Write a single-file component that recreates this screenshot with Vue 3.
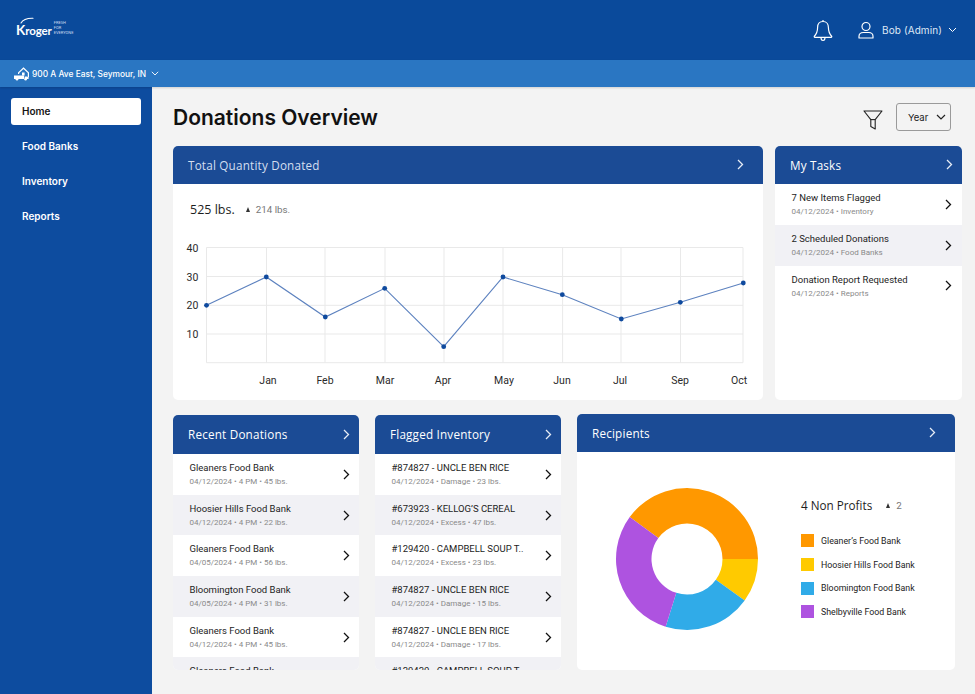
<script setup>
const nav = ['Home', 'Food Banks', 'Inventory', 'Reports']
const tasks = [
  ['7 New Items Flagged', '04/12/2024 • Inventory'],
  ['2 Scheduled Donations', '04/12/2024 • Food Banks'],
  ['Donation Report Requested', '04/12/2024 • Reports'],
]
const donations = [
  ['Gleaners Food Bank', '04/12/2024 • 4 PM • 45 lbs.'],
  ['Hoosier Hills Food Bank', '04/12/2024 • 4 PM • 22 lbs.'],
  ['Gleaners Food Bank', '04/05/2024 • 4 PM • 56 lbs.'],
  ['Bloomington Food Bank', '04/05/2024 • 4 PM • 31 lbs.'],
  ['Gleaners Food Bank', '04/12/2024 • 4 PM • 45 lbs.'],
  ['Gleaners Food Bank', '04/12/2024 • 4 PM • 45 lbs.'],
]
const flagged = [
  ['#874827 - UNCLE BEN RICE', '04/12/2024 • Damage • 23 lbs.'],
  ['#673923 - KELLOG’S CEREAL', '04/12/2024 • Excess • 47 lbs.'],
  ['#129420 - CAMPBELL SOUP T..', '04/12/2024 • Excess • 23 lbs.'],
  ['#874827 - UNCLE BEN RICE', '04/12/2024 • Damage • 15 lbs.'],
  ['#874827 - UNCLE BEN RICE', '04/12/2024 • Damage • 17 lbs.'],
  ['#129420 - CAMPBELL SOUP T..', '04/12/2024 • Excess • 23 lbs.'],
]
const lists = [
  { title: 'Recent Donations', rows: donations },
  { title: 'Flagged Inventory', rows: flagged },
]
const hLines = [
  { y: 247.5, label: '40' },
  { y: 276.5, label: '30' },
  { y: 305.3, label: '20' },
  { y: 334, label: '10' },
]
const months = [
  { x: 266.5, label: 'Jan', lx: 268 },
  { x: 325, label: 'Feb', lx: 325 },
  { x: 385, label: 'Mar', lx: 385 },
  { x: 444, label: 'Apr', lx: 443 },
  { x: 503, label: 'May', lx: 504 },
  { x: 562.6, label: 'Jun', lx: 562 },
  { x: 621, label: 'Jul', lx: 620 },
  { x: 680.5, label: 'Sep', lx: 680 },
  { x: 743, label: 'Oct', lx: 739 },
]
const points = [
  [206.5, 305.3], [266.3, 277], [325.3, 317], [384.7, 288.3], [443.7, 346.7],
  [503, 277], [562.3, 294.7], [621.3, 319], [680.3, 302.3], [743.3, 283],
]
const linePoints = points.map((p) => p.join(',')).join(' ')

const legend = [
  { name: 'Gleaner’s Food Bank', color: '#ff9800' },
  { name: 'Hoosier Hills Food Bank', color: '#ffca00' },
  { name: 'Bloomington Food Bank', color: '#30abe8' },
  { name: 'Shelbyville Food Bank', color: '#ae53e0' },
]
function arc(a0, a1, R = 71, r = 35.5) {
  const pt = (a, rad) => {
    const t = (a * Math.PI) / 180
    return `${(rad * Math.sin(t)).toFixed(2)} ${(-rad * Math.cos(t)).toFixed(2)}`
  }
  const large = a1 - a0 > 180 ? 1 : 0
  return `M${pt(a0, R)} A${R} ${R} 0 ${large} 1 ${pt(a1, R)} L${pt(a1, r)} A${r} ${r} 0 ${large} 0 ${pt(a0, r)} Z`
}
const segments = [
  { d: arc(-53.8, 90), color: '#ff9800' },
  { d: arc(90, 125.7), color: '#ffca00' },
  { d: arc(125.7, 197.5), color: '#30abe8' },
  { d: arc(197.5, 306.2), color: '#ae53e0' },
]
</script>

<template>
  <div class="app">
    <header class="topbar">
      <div class="logo">
        <svg class="logo-arc" width="16" height="7" viewBox="0 0 16 7" fill="none" stroke="#fff" stroke-width="1.1" stroke-linecap="round"><path d="M1 6C3 2.5 7 1 13 1.2" /></svg>
        <span class="logo-word"><span class="logo-k">K</span>roger</span>
        <span class="logo-tag"><span>FRESH</span><span>FOR</span><span>EVERYONE</span></span>
      </div>
      <div class="top-actions">
        <svg class="bell" width="20" height="24" viewBox="1 0 20 24" fill="none" stroke="#fff" stroke-width="1.2" stroke-linejoin="round">
          <path d="M11 2.5c-3.6 0-5.4 2.8-5.4 6 0 4.6-1.2 6.6-3.4 9 0 .6.3.9 1 .9h15.6c.7 0 1-.3 1-.9-2.2-2.4-3.4-4.4-3.4-9 0-3.2-1.8-6-5.4-6z" />
          <path d="M9 18.6c0 1.6.9 2.9 2 2.9s2-1.3 2-2.9" />
          <path d="M11 1v1.5" />
        </svg>
        <div class="user">
          <svg width="16" height="18" viewBox="0.5 0 16 18" fill="none" stroke="#fff" stroke-width="1.2">
            <circle cx="8.5" cy="5.5" r="4" />
            <path d="M1.5 17v-1.6c0-2.6 2.2-3.9 4.4-3.9h5.2c2.2 0 4.4 1.3 4.4 3.9V17z" stroke-linejoin="round" />
          </svg>
          <span class="user-name">Bob (Admin)</span>
          <svg class="user-chev" width="9" height="6" viewBox="0 0 9 6" fill="none" stroke="#fff" stroke-width="1"><path d="M1 1l3.5 3.5L8 1" /></svg>
        </div>
      </div>
    </header>

    <div class="subbar">
      <svg width="16" height="15" viewBox="1 0 16 15" fill="#fff">
        <path d="M5 6.5 10.5 1.2 16 6.5v5h-1.2V7L10.5 2.9 6.2 7v1H5z" />
        <rect x="9" y="6.5" width="2.6" height="3" />
        <path d="M1 9.5h10v3.4H1zM11.6 10.4h2.6l1.4 1.3v1.2h-4z" />
        <circle cx="4" cy="13.2" r="1.3" />
        <circle cx="12.6" cy="13.2" r="1.3" />
      </svg>
      <span>900 A Ave East, Seymour, IN</span>
      <svg width="8" height="5" viewBox="0 0 8 5" fill="none" stroke="#fff" stroke-width="0.9"><path d="M.8.8 4 4 7.2.8" /></svg>
    </div>

    <div class="body">
      <aside class="sidebar">
        <a v-for="(item, i) in nav" :key="item" class="nav-item" :class="{ active: i === 0 }">{{ item }}</a>
      </aside>

      <main class="main">
        <div class="page-head">
          <h1>Donations Overview</h1>
          <div class="page-tools">
            <svg width="20" height="21" viewBox="0 0 20 21" fill="none" stroke="#222" stroke-width="1.1" stroke-linejoin="round">
              <path d="M1 2h18l-6.8 8.6V20l-4.4-2.4v-7z" />
              <path d="M7.8 10.6h4.4" />
            </svg>
            <div class="select">
              <span>Year</span>
              <svg width="10" height="6" viewBox="0 0 10 6" fill="none" stroke="#222" stroke-width="1.2"><path d="M1 1l4 4 4-4" /></svg>
            </div>
          </div>
        </div>

        <section class="row-top">
          <article class="card">
            <div class="card-head">
              <span class="head-muted">Total Quantity Donated</span>
              <svg class="chev chev-wide" width="7" height="11" viewBox="0 0 7 11" fill="none" stroke="#e6ecf6" stroke-width="1.3"><path d="M1 1l4.5 4.5L1 10" /></svg>
            </div>
            <div class="stat">
              <span class="stat-main">525 lbs.</span>
              <span class="stat-delta"><i class="tri"></i>214 lbs.</span>
            </div>
            <svg class="chart" width="590" height="216" viewBox="173 184 590 216">
              <g stroke="#e9e9e9" stroke-width="1" fill="none">
                <line v-for="l in hLines" :key="l.y" x1="206.5" x2="743" :y1="l.y" :y2="l.y" />
                <line x1="206.5" x2="743" y1="362.7" y2="362.7" />
                <line x1="206.5" x2="206.5" y1="247.5" y2="362.7" />
                <line v-for="m in months" :key="m.label" :x1="m.x" :x2="m.x" y1="247.5" y2="362.7" />
              </g>
              <polyline :points="linePoints" fill="none" stroke="#5d82bf" stroke-width="1.1" />
              <circle v-for="p in points" :key="p[0]" :cx="p[0]" :cy="p[1]" r="2.4" fill="#0f4a9e" />
              <text v-for="l in hLines" :key="l.label" class="axis" x="192.5" :y="l.y + 4" text-anchor="middle">{{ l.label }}</text>
              <text v-for="m in months" :key="m.label" class="axis" :x="m.lx" y="383.5" text-anchor="middle">{{ m.label }}</text>
            </svg>
          </article>

          <article class="card">
            <div class="card-head">
              <span>My Tasks</span>
              <svg class="chev" width="7" height="11" viewBox="0 0 7 11" fill="none" stroke="#e6ecf6" stroke-width="1.3"><path d="M1 1l4.5 4.5L1 10" /></svg>
            </div>
            <div v-for="t in tasks" :key="t[0]" class="list-row">
              <div class="row-text">
                <div class="row-title">{{ t[0] }}</div>
                <div class="row-sub">{{ t[1] }}</div>
              </div>
              <svg class="chev" width="7" height="11" viewBox="0 0 7 11" fill="none" stroke="#111" stroke-width="1.3"><path d="M1 1l4.5 4.5L1 10" /></svg>
            </div>
          </article>
        </section>

        <section class="row-bottom">
          <article v-for="list in lists" :key="list.title" class="card card-list">
            <div class="card-head">
              <span>{{ list.title }}</span>
              <svg class="chev" width="7" height="11" viewBox="0 0 7 11" fill="none" stroke="#e6ecf6" stroke-width="1.3"><path d="M1 1l4.5 4.5L1 10" /></svg>
            </div>
            <div v-for="(r, i) in list.rows" :key="i" class="list-row">
              <div class="row-text">
                <div class="row-title">{{ r[0] }}</div>
                <div class="row-sub">{{ r[1] }}</div>
              </div>
              <svg class="chev" width="7" height="11" viewBox="0 0 7 11" fill="none" stroke="#111" stroke-width="1.3"><path d="M1 1l4.5 4.5L1 10" /></svg>
            </div>
          </article>

          <article class="card card-recipients">
            <div class="card-head">
              <span>Recipients</span>
              <svg class="chev chev-wide" width="7" height="11" viewBox="0 0 7 11" fill="none" stroke="#e6ecf6" stroke-width="1.3"><path d="M1 1l4.5 4.5L1 10" /></svg>
            </div>
            <div class="rec-body">
              <svg width="144" height="144" viewBox="-72 -72 144 144">
                <path v-for="s in segments" :key="s.color" :d="s.d" :fill="s.color" />
              </svg>
              <div class="legend">
                <div class="legend-head">
                  <span class="stat-main small">4 Non Profits</span>
                  <span class="stat-delta"><i class="tri"></i>2</span>
                </div>
                <div v-for="l in legend" :key="l.name" class="legend-item">
                  <i class="swatch" :style="{ background: l.color }"></i>
                  <span>{{ l.name }}</span>
                </div>
              </div>
            </div>
          </article>
        </section>
      </main>
    </div>
  </div>
</template>

<style>
html, body { margin: 0; background: #f3f3f3; }
</style>

<style scoped>
.app {
  width: 975px;
  height: 694px;
  overflow: hidden;
  display: flex;
  flex-direction: column;
  font-family: Roboto, "Liberation Sans", sans-serif;
  color: #1c1c1c;
}
.topbar {
  height: 60px;
  flex: none;
  background: #0a4a9b;
  display: flex;
  align-items: center;
  justify-content: space-between;
  padding: 0 18px 0 16px;
}
.logo { display: flex; align-items: center; gap: 2px; color: #fff; position: relative; }
.logo-arc { position: absolute; left: 4px; top: -5px; }
.logo-word { font-family: Lato, sans-serif; font-weight: 700; font-size: 11.5px; letter-spacing: -0.1px; }
.logo-k { font-size: 13.5px; }
.logo-tag { display: flex; flex-direction: column; font-size: 4px; line-height: 5px; color: #cfdcf0; font-family: Roboto, sans-serif; margin-top: -5px; }
.top-actions { display: flex; align-items: center; gap: 25px; }
.bell { margin-top: 1px; }
.user { display: flex; align-items: center; gap: 8px; color: #dfe8f5; }
.user-name { font-family: Inter, sans-serif; font-size: 10px; letter-spacing: 0.1px; }
.user-chev { margin-left: -2px; }
.subbar {
  height: 27px;
  flex: none;
  background: #2a76c2;
  display: flex;
  align-items: center;
  gap: 2px;
  padding-left: 14px;
  color: #fff;
  font-family: Inter, sans-serif;
  font-size: 8.4px;
  font-weight: 500;
  box-shadow: 0 1px 2px rgba(0, 0, 0, 0.15);
  position: relative;
}
.subbar svg:last-child { margin-left: 3px; }
.body { flex: 1; display: flex; min-height: 0; }
.sidebar {
  width: 152px;
  flex: none;
  box-sizing: border-box;
  background: #0d4c9f;
  padding: 11px 11px 0;
  display: flex;
  flex-direction: column;
  gap: 8px;
}
.nav-item {
  height: 27px;
  line-height: 27px;
  padding-left: 11px;
  font-family: Inter, sans-serif;
  font-size: 10px;
  font-weight: 600;
  color: #fff;
  border-radius: 3px;
}
.nav-item.active { background: #fff; color: #151515; }
.main { flex: 1; padding-left: 21px; min-width: 0; }
.page-head {
  height: 59px;
  display: flex;
  align-items: center;
  justify-content: space-between;
  padding-right: 24px;
}
.page-head h1 {
  margin: 1px 0 0;
  font-family: Inter, sans-serif;
  font-size: 21px;
  font-weight: 600;
  color: #111;
  letter-spacing: 0;
}
.page-tools { display: flex; align-items: center; gap: 13px; margin-top: 1px; }
.page-tools > svg { margin-top: 5px; }
.select {
  width: 55px;
  height: 28px;
  box-sizing: border-box;
  border: 1px solid #9a9a9a;
  border-radius: 3px;
  display: flex;
  align-items: center;
  justify-content: space-between;
  padding: 0 4px 0 11px;
  font-family: Inter, sans-serif;
  font-size: 9.5px;
}
.row-top {
  display: grid;
  grid-template-columns: 590px 187px;
  gap: 12px;
  height: 254px;
}
.row-bottom {
  margin-top: 15px;
  display: grid;
  grid-template-columns: 186px 186px 378px;
  gap: 16px;
  height: 255px;
}
.card {
  background: #fff;
  border-radius: 5px;
  overflow: hidden;
  position: relative;
}
.card-head {
  height: 38px;
  box-sizing: border-box;
  padding: 0 9px 1px 15px;
  background: #1b4b95;
  color: #fff;
  display: flex;
  align-items: center;
  justify-content: space-between;
  font-family: "Open Sans", sans-serif;
  font-size: 11.7px;
  letter-spacing: 0.2px;
}
.card-list .card-head { height: 39px; }
.card-recipients { margin-top: -1px; }
.head-muted { color: #d4dff0; }
.chev-wide { margin-right: 10px; }
.stat {
  position: absolute;
  left: 17px;
  top: 55px;
  display: flex;
  align-items: center;
  gap: 11px;
}
.stat-main { font-family: "Open Sans", sans-serif; font-size: 12.5px; color: #1d1d1d; }
.stat-main.small { font-size: 11.7px; }
.stat-delta { font-family: Roboto, sans-serif; font-size: 9.8px; color: #777; display: inline-flex; align-items: center; gap: 6px; }
.tri {
  width: 0;
  height: 0;
  border-left: 2.6px solid transparent;
  border-right: 2.6px solid transparent;
  border-bottom: 5px solid #333;
}
.chart { display: block; }
.axis { font-family: Roboto, sans-serif; font-size: 10.5px; fill: #2a2a2a; }
.list-row {
  height: 40.8px;
  box-sizing: border-box;
  display: flex;
  align-items: center;
  justify-content: space-between;
  padding: 0 10px 0 16.5px;
  background: #fff;
}
.list-row:nth-child(odd) { background: #f1f1f5; }
.card-list .list-row { height: 40.7px; padding-right: 9px; }
.row-text { min-width: 0; padding-top: 1px; }
.card-list .row-text { padding-top: 0; }
.row-title { font-family: Roboto, sans-serif; font-size: 9.5px; line-height: 13px; color: #1d1d1d; white-space: nowrap; }
.row-sub { font-family: Roboto, sans-serif; font-size: 8px; line-height: 12px; margin-top: 2px; color: #8a8a8a; white-space: nowrap; }
.rec-body {
  display: flex;
  align-items: flex-start;
  padding: 35px 0 0 38px;
  height: 218px;
  box-sizing: border-box;
}
.legend { margin-left: 42px; padding-top: 9px; }
.legend-head { display: flex; align-items: center; gap: 14px; height: 18px; margin-bottom: 15px; }
.legend-item {
  display: flex;
  align-items: center;
  gap: 7px;
  height: 23.7px;
  font-family: Roboto, sans-serif;
  font-size: 8.8px;
  color: #222;
}
.swatch { width: 13px; height: 13px; display: block; }
</style>
